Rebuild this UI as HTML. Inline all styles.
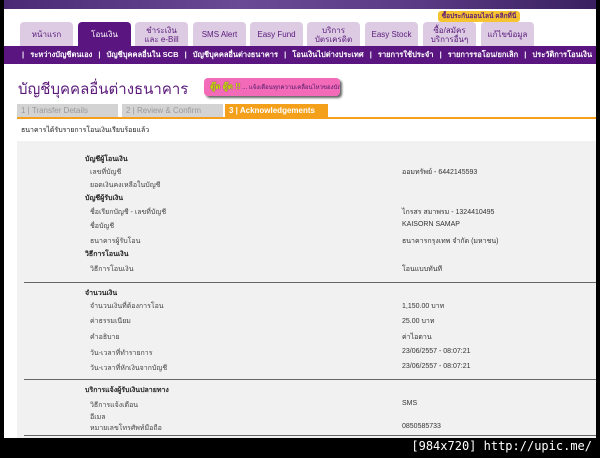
<!DOCTYPE html>
<html><head><meta charset="utf-8">
<style>
*{margin:0;padding:0;box-sizing:border-box}
body{width:600px;height:458px;overflow:hidden;background:#000;position:relative;font-family:"Liberation Sans","Noto Sans CJK SC",sans-serif}
.page{position:absolute;left:4px;top:0;width:592px;height:438px;background:#fff;overflow:hidden}
.top{position:absolute;left:0;top:0;width:592px;height:9px;background:linear-gradient(90deg,#4a2a74,#6a4a94 40%,#5a3a84 70%,#3a2060)}
.tab{position:absolute;top:22px;height:25px;width:53px;background:#dccbe3;border-radius:4px 4px 0 0;color:#5a1a7a;font-size:8px;text-align:center;display:flex;align-items:center;justify-content:center;line-height:9px}
.tab.on{background:#5a1580;color:#fff}
.nav{position:absolute;left:0;top:46px;width:592px;height:18px;background:#5a1580;color:#fff;font-size:7.5px;font-weight:bold;white-space:nowrap;padding-left:18px;line-height:18px}
.nav span{margin:0 4px}
.title{position:absolute;left:14px;top:77px;font-size:15px;color:#5a1a7a;white-space:nowrap}
.pink{position:absolute;left:200px;top:78px;width:136px;height:18px;background:#f26ab8;border-radius:4px;box-shadow:2px 2px 2px #666;font-size:6px;color:#4a1a6a;line-height:18px;padding-left:6px;white-space:nowrap;overflow:hidden}
.pink b{color:#c8e000;text-shadow:0 0 1px #333;font-size:8px}
.st{position:absolute;top:104px;height:14px;font-size:8px;line-height:14px;padding-left:4px;color:#999;background:#d3d3d3}
.oline{position:absolute;left:13px;top:117px;width:579px;height:2px;background:#f5a01a}
.msg{position:absolute;left:17px;top:125px;font-size:7px;color:#222}
.panel{position:absolute;left:13px;top:141px;width:579px;height:297px;background:#f1f1f1}
.t{position:absolute;font-size:7px;color:#444;white-space:nowrap}
.h{font-weight:bold;color:#222;left:81px}
.l{left:86px}
.v{left:398px;color:#333}
.hr{position:absolute;left:20px;width:572px;height:1px;background:#666}
.wm{position:absolute;right:8px;top:439px;color:#fff;font-family:"DejaVu Sans Mono",monospace;font-size:12px}
</style></head><body>
<div class="page">
<div class="top"></div>
<div style="position:absolute;left:434px;top:11px;width:82px;height:11px;background:#f5c430;border-radius:3px;font-size:6.5px;color:#5a1a7a;text-align:center;line-height:11px;font-weight:bold">ซื้อประกันออนไลน์ คลิกที่นี่</div>
<div class="tab" style="left:16px">หน้าแรก</div>
<div class="tab on" style="left:74px">โอนเงิน</div>
<div class="tab" style="left:131px">ชำระเงิน<br>และ e-Bill</div>
<div class="tab" style="left:189px">SMS Alert</div>
<div class="tab" style="left:246px">Easy Fund</div>
<div class="tab" style="left:303px">บริการ<br>บัตรเครดิต</div>
<div class="tab" style="left:361px">Easy Stock</div>
<div class="tab" style="left:419px">ซื้อ/สมัคร<br>บริการอื่นๆ</div>
<div class="tab" style="left:477px">แก้ไขข้อมูล</div>
<div class="nav">| <span>ระหว่างบัญชีตนเอง</span> | <span>บัญชีบุคคลอื่นใน SCB</span> | <span>บัญชีบุคคลอื่นต่างธนาคาร</span> | <span>โอนเงินไปต่างประเทศ</span> | <span>รายการใช้ประจำ</span> | <span>รายการรอโอน/ยกเลิก</span> | <span>ประวัติการโอนเงิน</span> |</div>
<div class="title">บัญชีบุคคลอื่นต่างธนาคาร</div>
<div class="pink"><b>ตู๊ด ตู๊ด !!</b> ... แจ้งเตือนทุกความเคลื่อนไหวของบัญชีผ่าน SMS</div>
<div class="st" style="left:13px;width:101px">1 | Transfer Details</div>
<div class="st" style="left:118px;width:101px">2 | Review &amp; Confirm</div>
<div class="st" style="left:221px;width:103px;background:#f5a01a;color:#fff;font-weight:bold">3 | Acknowledgements</div>
<div class="oline"></div>
<div class="msg">ธนาคารได้รับรายการโอนเงินเรียบร้อยแล้ว</div>
<div class="panel"></div>
<div class="t h" style="top:154px">บัญชีผู้โอนเงิน</div>
<div class="t l" style="top:167px">เลขที่บัญชี</div><div class="t v" style="top:167px">ออมทรัพย์ - 6442145593</div>
<div class="t l" style="top:180px">ยอดเงินคงเหลือในบัญชี</div>
<div class="t h" style="top:193px">บัญชีผู้รับเงิน</div>
<div class="t l" style="top:207px">ชื่อเรียกบัญชี - เลขที่บัญชี</div><div class="t v" style="top:207px">ไกรสร สมาพรม - 1324410495</div>
<div class="t l" style="top:221px">ชื่อบัญชี</div><div class="t v" style="top:221px">KAISORN SAMAP</div>
<div class="t l" style="top:236px">ธนาคารผู้รับโอน</div><div class="t v" style="top:236px">ธนาคารกรุงเทพ จำกัด (มหาชน)</div>
<div class="t h" style="top:249px">วิธีการโอนเงิน</div>
<div class="t l" style="top:264px">วิธีการโอนเงิน</div><div class="t v" style="top:264px">โอนแบบทันที</div>
<div class="hr" style="top:282px"></div>
<div class="t h" style="top:288px">จำนวนเงิน</div>
<div class="t l" style="top:301px">จำนวนเงินที่ต้องการโอน</div><div class="t v" style="top:301px">1,150.00 บาท</div>
<div class="t l" style="top:316px">ค่าธรรมเนียม</div><div class="t v" style="top:316px">25.00 บาท</div>
<div class="t l" style="top:332px">คำอธิบาย</div><div class="t v" style="top:332px">ค่าไอดาน</div>
<div class="t l" style="top:348px">วัน-เวลาที่ทำรายการ</div><div class="t v" style="top:348px">23/06/2557 - 08:07:21</div>
<div class="t l" style="top:363px">วัน-เวลาที่หักเงินจากบัญชี</div><div class="t v" style="top:363px">23/06/2557 - 08:07:21</div>
<div class="hr" style="top:379px"></div>
<div class="t h" style="top:385px">บริการแจ้งผู้รับเงินปลายทาง</div>
<div class="t l" style="top:400px">วิธีการแจ้งเตือน</div><div class="t v" style="top:400px">SMS</div>
<div class="t l" style="top:412px">อีเมล</div>
<div class="t l" style="top:423px">หมายเลขโทรศัพท์มือถือ</div><div class="t v" style="top:423px">0850585733</div>
<div class="hr" style="top:435px"></div>
</div>
<div class="wm">[984x720] http://upic.me/</div>
</body></html>
